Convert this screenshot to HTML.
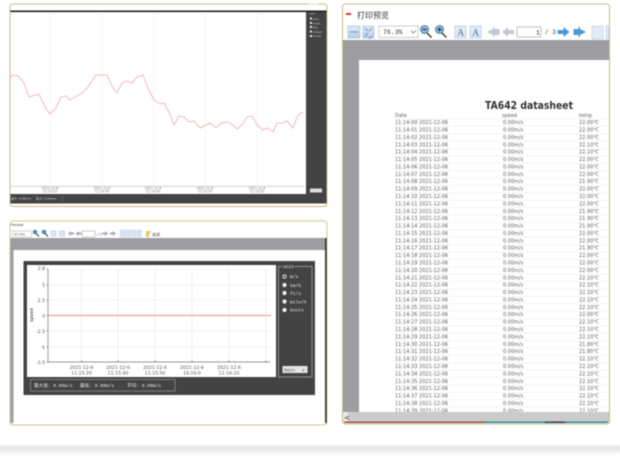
<!DOCTYPE html>
<html>
<head>
<meta charset="utf-8">
<style>
html,body{margin:0;padding:0;background:#fff;width:620px;height:466px;overflow:hidden}
svg{display:block;filter:blur(.45px)}
text{font-family:"DejaVu Sans","Noto Sans CJK SC",sans-serif}
.m{font-family:"Liberation Mono","Noto Sans CJK SC",monospace}
.r text{font-size:5px;fill:#5e5e5e}
.g{stroke:#e8e8e8;stroke-width:.6}
.w text{fill:#e8e8e8;font-size:4.6px;font-family:"Liberation Mono",monospace}
.t{font-size:4.6px;fill:#555;font-family:"Liberation Mono",monospace}
</style>
</head>
<body>
<svg width="620" height="466" viewBox="0 0 620 466" xmlns="http://www.w3.org/2000/svg">
<defs>
<linearGradient id="sh" x1="0" y1="0" x2="0" y2="1"><stop offset="0" stop-color="#fff"/><stop offset=".3" stop-color="#e4e4e4"/><stop offset="1" stop-color="#fff"/></linearGradient>
<linearGradient id="bl" x1="0" y1="0" x2="0" y2="1"><stop offset="0" stop-color="#e4eef8"/><stop offset="1" stop-color="#b4cde6"/></linearGradient>
<clipPath id="c3"><rect x="343" y="5" width="266" height="418" rx="3"/></clipPath>
<pattern id="rows" patternUnits="userSpaceOnUse" x="394" y="118.6" width="215" height="7.39"><rect width="215" height=".6" fill="#eaeaea"/></pattern>
</defs>
<rect width="620" height="466" fill="#fff"/>
<rect x="0" y="444" width="620" height="12" fill="url(#sh)"/>

<!-- PANEL 1 -->
<rect x="10" y="4" width="317" height="202.5" rx="3" fill="#fff" stroke="#c9ba80" stroke-width="1"/>
<rect x="10.500" y="10.500" width="316" height="1.600" fill="#222"/>
<rect x="306" y="12" width="20.500" height="182" fill="#434343"/>
<rect x="10.500" y="194" width="316" height="9.500" fill="#434343"/>
<rect x="62" y="196" width=".6" height="6" fill="#777"/>
<g stroke="#f0f0f0" stroke-width=".6"><path d="M50.500 12V186M102 12V186M153.500 12V186M205 12V186M256.500 12V186"/></g>
<rect x="10.500" y="186" width="293" height=".7" fill="#bbb"/>
<polyline fill="none" stroke="#f0b9bd" stroke-width="1" points="10,78 13,75 18,76 24,83 29,97 39,94 45,107 50,114 56,108 61,97 66,96 70,100 82,93 88,87 96,75 107,75 112,86 117,93 122,83 127,81 132,83 137,77 143,75 148,88 154,100 160,104 164,103 169,112 174,125 179,116 184,117 189,122 194,121 200,128 210,123 216,128 221,123 227,122 232,124 237,129 242,125 247,117 252,116 257,125 263,130 267,128 273,132 277,123 283,123 287,121 293,128 298,115 303,112"/>
<g font-size="3.2" fill="#777" text-anchor="middle">
<text x="50" y="189.500">2021-12-6</text><text x="50" y="192.500">11:14:20</text>
<text x="102" y="189.500">2021-12-6</text><text x="102" y="192.500">11:14:30</text>
<text x="153" y="189.500">2021-12-6</text><text x="153" y="192.500">11:14:40</text>
<text x="205" y="189.500">2021-12-6</text><text x="205" y="192.500">11:14:50</text>
<text x="257" y="189.500">2021-12-6</text><text x="257" y="192.500">11:15:00</text>
</g>
<g fill="#eee"><rect x="310" y="17.500" width="2" height="2"/><rect x="310" y="22" width="2" height="2"/><rect x="310" y="26" width="2" height="2"/><rect x="310" y="30.500" width="2" height="2"/><rect x="310" y="35" width="2" height="2"/></g>
<g font-size="3" fill="#ccc"><text x="309" y="14.500">unit</text><text x="313" y="20">m/s</text><text x="313" y="24.500">km/h</text><text x="313" y="28.500">ft/s</text><text x="313" y="33">mile/h</text><text x="313" y="37">knots</text></g>
<rect x="310" y="188.500" width="12" height="4" fill="#ddd"/>
<g font-size="3" fill="#ddd"><text x="11" y="199.500">最大: 0.00m/s</text><text x="36" y="199.500">最小: 0.00m/s</text></g>
<rect x="308" y="3" width="10" height="1" fill="#fff"/>

<!-- PANEL 2 -->
<rect x="10" y="221" width="317" height="204" rx="3" fill="#fff" stroke="#d3c68f" stroke-width="1"/>
<rect x="10.500" y="238" width="316" height="12" fill="#9e9ea2"/>
<rect x="10.500" y="250" width="3" height="173" fill="#9e9ea2"/>
<rect x="325" y="238" width="1.600" height="185" fill="#333"/>
<text x="11" y="226" font-size="3.200" fill="#333">Preview</text>
<rect x="12.500" y="231" width="19" height="6" fill="#fff" stroke="#aaa" stroke-width=".5"/>
<text x="14" y="235.500" font-size="3.500" fill="#555">97.9%</text>
<g fill="#5a86b8"><circle cx="35" cy="232" r="2.300"/><circle cx="44" cy="232" r="2.300"/></g>
<path d="M36 233.500l3 3M45 233.500l3 3" stroke="#333" stroke-width="1"/>
<g fill="#dce8f4" stroke="#a9c0d8" stroke-width=".5"><rect x="51" y="231" width="5" height="5"/><rect x="59.500" y="231" width="5" height="5"/></g>
<path d="M68 233.500l3-2.500v1.500h3v2h-3v1.500zM75.500 233.500l3-2.500v1.500h3v2h-3v1.500z" fill="#aab"/>
<rect x="82" y="231" width="13" height="6" fill="#fff" stroke="#999" stroke-width=".5"/>
<text x="97" y="235.500" font-size="3.500" fill="#555">/ 1</text>
<path d="M108 233.500l-3-2.500v1.500h-3v2h3v1.500zM116 233.500l-3-2.500v1.500h-3v2h3v1.500z" fill="#aab"/>
<g fill="#d9e6f3" stroke="#c1d3e6" stroke-width=".4"><rect x="120" y="230" width="4.500" height="7"/><rect x="125" y="230" width="4.500" height="7"/><rect x="130" y="230" width="4.500" height="7"/><rect x="135" y="230" width="4.500" height="7"/><rect x="139" y="230" width="2.500" height="7"/></g>
<path d="M146 231h5v2h-2v4h-3z" fill="#e6c85a"/>
<text x="152" y="236" font-size="4" fill="#444">关闭</text>

<rect x="23.500" y="261" width="291.500" height="134" fill="#434343"/>
<rect x="27" y="265" width="249" height="112" fill="#fff"/>
<g class="g"><path d="M48 285H270M48 300H270M48 331H270M48 347H270M81.500 269V362M118 269V362M155 269V362M192 269V362M229 269V362M266 269V362"/></g>
<path d="M48 269V362H270" fill="none" stroke="#777" stroke-width=".7"/>
<path d="M46.500 269h1.500M46.500 285h1.500M46.500 300h1.500M46.500 315.500h1.500M46.500 331h1.500M46.500 347h1.500M46.500 362h1.500M81.500 362v-1.500M118 362v-1.500M155 362v-1.500M192 362v-1.500M229 362v-1.500M266 362v-1.500" stroke="#444" stroke-width=".6"/>
<rect x="48" y="315" width="223" height="1" fill="#e48f8f"/>
<g class="t" text-anchor="end"><text x="45" y="270">2.8</text><text x="45" y="286.500">5</text><text x="45" y="302">2.5</text><text x="45" y="317.500">0</text><text x="45" y="333">-2.5</text><text x="45" y="349">-5</text><text x="45" y="364">-2.5</text></g>
<text class="t" transform="translate(33,322) rotate(-90)" style="font-weight:bold">speed</text>
<g class="t" text-anchor="middle">
<text x="81.500" y="369">2021-12-6</text><text x="81.500" y="374.500">11:15:20</text>
<text x="118" y="369">2021-12-6</text><text x="118" y="374.500">11:15:40</text>
<text x="155" y="369">2021-12-6</text><text x="155" y="374.500">11:15:50</text>
<text x="192" y="369">2021-12-6</text><text x="192" y="374.500">16:16:0</text>
<text x="229" y="369">2021-12-6</text><text x="229" y="374.500">11:16:10</text>
</g>
<path d="M282 266.500h-3.500v110.500h33.500V266.500H294" fill="none" stroke="#aaa" stroke-width=".7"/>
<g class="w">
<text x="283" y="268">unit</text>
<text x="290" y="278">m/s</text><text x="290" y="287">km/h</text><text x="290" y="295">ft/s</text><text x="290" y="303.500">mile/h</text><text x="290" y="311.500">knots</text>
</g>
<circle cx="284.500" cy="276.500" r="1.600" fill="#333" stroke="#eee" stroke-width="1"/>
<g fill="#f2f2f2"><circle cx="284.500" cy="285" r="2.100"/><circle cx="284.500" cy="293" r="2.100"/><circle cx="284.500" cy="301.500" r="2.100"/><circle cx="284.500" cy="310" r="2.100"/></g>
<rect x="282.500" y="366" width="25" height="7" fill="#e6e6e6"/>
<text x="284" y="371.500" class="t" fill="#333">Dmin</text>
<text x="302" y="371.500" class="t">v</text>
<rect x="30.500" y="379.500" width="144.500" height="11.500" fill="none" stroke="#999" stroke-width=".7"/>
<g class="w"><text x="34" y="387">最大速: 0.00m/s</text><text x="80" y="387">最低: 0.00m/s</text><text x="127" y="387">平均: 0.00m/s</text></g>

<!-- PANEL 3 -->
<rect x="342.500" y="4" width="267" height="420" rx="3" fill="#fff" stroke="#c9ba80" stroke-width="1"/>
<g clip-path="url(#c3)">
<rect x="343" y="40" width="267" height="373" fill="#9e9ea2"/>
<rect x="359" y="60" width="252" height="353" fill="#fff"/>
<rect x="343" y="421.500" width="140" height="3" fill="#a8454b"/>
<rect x="483" y="421.500" width="127" height="3" fill="#2a8a98"/>
<rect x="545" y="421.500" width="20" height="2" fill="#2a3450"/>
</g>
<rect x="346" y="13" width="5" height="2" fill="#d23030"/>
<text x="357" y="18" font-size="8" fill="#333">打印预览</text>
<g fill="url(#bl)" stroke="#9db8d4" stroke-width=".6"><rect x="348" y="26" width="12" height="12"/><rect x="363" y="26" width="11" height="12"/></g>
<path d="M350 32h8M365 28l3 3M372 28l-3 3M365 36l3-3M372 36l-3 3" stroke="#4a7fb0" stroke-width=".8" fill="none"/>
<rect x="379" y="26" width="39" height="11.500" fill="#fff" stroke="#aaa" stroke-width=".6"/>
<text x="383" y="34" font-size="6.500" class="m" fill="#333">76.3%</text>
<path d="M411 30.500l2.500 2.500 2.500-2.500" fill="none" stroke="#666" stroke-width=".7"/>
<circle cx="424.500" cy="29.500" r="4" fill="#8fb6dc" stroke="#3c6ea0" stroke-width=".8"/>
<circle cx="439.500" cy="29.500" r="4" fill="#8fb6dc" stroke="#3c6ea0" stroke-width=".8"/>
<path d="M422.500 29.500h4M437.500 29.500h4M439.500 27.500v4" stroke="#123" stroke-width=".9"/>
<path d="M427 33l4.500 4.500M442 33l4.500 4.500" stroke="#333" stroke-width="1.400"/>
<g fill="#e0ebf6" stroke="#a8c0d8" stroke-width=".6"><rect x="455" y="26" width="11" height="12"/><rect x="470" y="26" width="11" height="12"/></g>
<text x="457" y="36" font-size="10" style="font-family:'Liberation Serif',serif" fill="#3a6ea8">A</text>
<text x="472" y="36" font-size="10" style="font-family:'Liberation Serif',serif" fill="#3a6ea8">A</text>
<path d="M487 32l6-3v-2l1.500 0v2h5v6h-5v2h-1.500v-2z" fill="#c2c8ce"/>
<path d="M502 32l6-5v3h6v4h-6v3z" fill="#c2c8ce"/>
<rect x="517" y="27" width="24" height="10" fill="#fff" stroke="#999" stroke-width=".6"/>
<text x="536" y="34.500" font-size="6.500" class="m" fill="#333">1</text>
<text x="545" y="34" font-size="6" class="m" fill="#333">/ 3</text>
<path d="M569.500 32l-6-5v3h-6v4h6v3z" fill="#4e9ad8"/>
<path d="M586 32l-6-3v-2h-1.500v2h-5v6h5v2h1.500v-2z" fill="#4e9ad8"/>
<g fill="#e2ecf6" stroke="#b5c8da" stroke-width=".6"><rect x="592" y="26" width="11" height="13"/><rect x="606" y="26" width="3" height="13"/></g>
<text x="485" y="109" font-size="11" font-weight="bold" fill="#333" textLength="88" lengthAdjust="spacingAndGlyphs">TA642 datasheet</text>
<rect x="394" y="118.600" width="215" height="294" fill="url(#rows)"/>
<g class="r">
<text y="116.800"><tspan x="395">Date</tspan><tspan x="502">speed</tspan><tspan x="579">temp</tspan></text>
<text y="124.100"><tspan x="395">11:14:00 2021-12-06</tspan><tspan x="503">0.00m/s</tspan><tspan x="579">22.00℃</tspan></text>
<text y="131.500"><tspan x="395">11:14:01 2021-12-06</tspan><tspan x="503">0.00m/s</tspan><tspan x="579">22.00℃</tspan></text>
<text y="138.900"><tspan x="395">11:14:02 2021-12-06</tspan><tspan x="503">0.00m/s</tspan><tspan x="579">22.00℃</tspan></text>
<text y="146.300"><tspan x="395">11:14:03 2021-12-06</tspan><tspan x="503">0.00m/s</tspan><tspan x="579">22.10℃</tspan></text>
<text y="153.700"><tspan x="395">11:14:04 2021-12-06</tspan><tspan x="503">0.00m/s</tspan><tspan x="579">22.10℃</tspan></text>
<text y="161.050"><tspan x="395">11:14:05 2021-12-06</tspan><tspan x="503">0.00m/s</tspan><tspan x="579">22.00℃</tspan></text>
<text y="168.400"><tspan x="395">11:14:06 2021-12-06</tspan><tspan x="503">0.00m/s</tspan><tspan x="579">22.00℃</tspan></text>
<text y="175.800"><tspan x="395">11:14:07 2021-12-06</tspan><tspan x="503">0.00m/s</tspan><tspan x="579">22.00℃</tspan></text>
<text y="183.200"><tspan x="395">11:14:08 2021-12-06</tspan><tspan x="503">0.00m/s</tspan><tspan x="579">21.90℃</tspan></text>
<text y="190.600"><tspan x="395">11:14:09 2021-12-06</tspan><tspan x="503">0.00m/s</tspan><tspan x="579">22.00℃</tspan></text>
<text y="198"><tspan x="395">11:14:10 2021-12-06</tspan><tspan x="503">0.00m/s</tspan><tspan x="579">22.00℃</tspan></text>
<text y="205.400"><tspan x="395">11:14:11 2021-12-06</tspan><tspan x="503">0.00m/s</tspan><tspan x="579">22.00℃</tspan></text>
<text y="212.800"><tspan x="395">11:14:12 2021-12-06</tspan><tspan x="503">0.00m/s</tspan><tspan x="579">21.90℃</tspan></text>
<text y="220.200"><tspan x="395">11:14:13 2021-12-06</tspan><tspan x="503">0.00m/s</tspan><tspan x="579">21.90℃</tspan></text>
<text y="227.600"><tspan x="395">11:14:14 2021-12-06</tspan><tspan x="503">0.00m/s</tspan><tspan x="579">21.90℃</tspan></text>
<text y="235"><tspan x="395">11:14:15 2021-12-06</tspan><tspan x="503">0.00m/s</tspan><tspan x="579">22.00℃</tspan></text>
<text y="242.300"><tspan x="395">11:14:16 2021-12-06</tspan><tspan x="503">0.00m/s</tspan><tspan x="579">22.00℃</tspan></text>
<text y="249.700"><tspan x="395">11:14:17 2021-12-06</tspan><tspan x="503">0.00m/s</tspan><tspan x="579">21.90℃</tspan></text>
<text y="257.100"><tspan x="395">11:14:18 2021-12-06</tspan><tspan x="503">0.00m/s</tspan><tspan x="579">22.00℃</tspan></text>
<text y="264.500"><tspan x="395">11:14:19 2021-12-06</tspan><tspan x="503">0.00m/s</tspan><tspan x="579">22.00℃</tspan></text>
<text y="271.900"><tspan x="395">11:14:20 2021-12-06</tspan><tspan x="503">0.00m/s</tspan><tspan x="579">22.00℃</tspan></text>
<text y="279.300"><tspan x="395">11:14:21 2021-12-06</tspan><tspan x="503">0.00m/s</tspan><tspan x="579">22.10℃</tspan></text>
<text y="286.700"><tspan x="395">11:14:22 2021-12-06</tspan><tspan x="503">0.00m/s</tspan><tspan x="579">22.10℃</tspan></text>
<text y="294.100"><tspan x="395">11:14:23 2021-12-06</tspan><tspan x="503">0.00m/s</tspan><tspan x="579">22.10℃</tspan></text>
<text y="301.500"><tspan x="395">11:14:24 2021-12-06</tspan><tspan x="503">0.00m/s</tspan><tspan x="579">22.10℃</tspan></text>
<text y="308.900"><tspan x="395">11:14:25 2021-12-06</tspan><tspan x="503">0.00m/s</tspan><tspan x="579">22.10℃</tspan></text>
<text y="316.200"><tspan x="395">11:14:26 2021-12-06</tspan><tspan x="503">0.00m/s</tspan><tspan x="579">22.00℃</tspan></text>
<text y="323.600"><tspan x="395">11:14:27 2021-12-06</tspan><tspan x="503">0.00m/s</tspan><tspan x="579">22.10℃</tspan></text>
<text y="331"><tspan x="395">11:14:28 2021-12-06</tspan><tspan x="503">0.00m/s</tspan><tspan x="579">22.10℃</tspan></text>
<text y="338.400"><tspan x="395">11:14:29 2021-12-06</tspan><tspan x="503">0.00m/s</tspan><tspan x="579">22.10℃</tspan></text>
<text y="345.800"><tspan x="395">11:14:30 2021-12-06</tspan><tspan x="503">0.00m/s</tspan><tspan x="579">21.80℃</tspan></text>
<text y="353.200"><tspan x="395">11:14:31 2021-12-06</tspan><tspan x="503">0.00m/s</tspan><tspan x="579">21.80℃</tspan></text>
<text y="360.600"><tspan x="395">11:14:32 2021-12-06</tspan><tspan x="503">0.00m/s</tspan><tspan x="579">22.10℃</tspan></text>
<text y="368"><tspan x="395">11:14:33 2021-12-06</tspan><tspan x="503">0.00m/s</tspan><tspan x="579">22.10℃</tspan></text>
<text y="375.400"><tspan x="395">11:14:34 2021-12-06</tspan><tspan x="503">0.00m/s</tspan><tspan x="579">22.10℃</tspan></text>
<text y="382.800"><tspan x="395">11:14:35 2021-12-06</tspan><tspan x="503">0.00m/s</tspan><tspan x="579">22.10℃</tspan></text>
<text y="390.100"><tspan x="395">11:14:36 2021-12-06</tspan><tspan x="503">0.00m/s</tspan><tspan x="579">22.10℃</tspan></text>
<text y="397.500"><tspan x="395">11:14:37 2021-12-06</tspan><tspan x="503">0.00m/s</tspan><tspan x="579">22.10℃</tspan></text>
<text y="404.900"><tspan x="395">11:14:38 2021-12-06</tspan><tspan x="503">0.00m/s</tspan><tspan x="579">22.10℃</tspan></text>
<text y="412.300"><tspan x="395">11:14:39 2021-12-06</tspan><tspan x="503">0.00m/s</tspan><tspan x="579">22.10℃</tspan></text>
</g>
<rect x="343" y="412" width="266" height="9.500" fill="#cbcbcb"/>
<rect x="343" y="412" width="5" height="9.500" fill="#e8e8e8"/>
<text x="344" y="420" font-size="7" fill="#333">&lt;</text>
</svg>
</body>
</html>
